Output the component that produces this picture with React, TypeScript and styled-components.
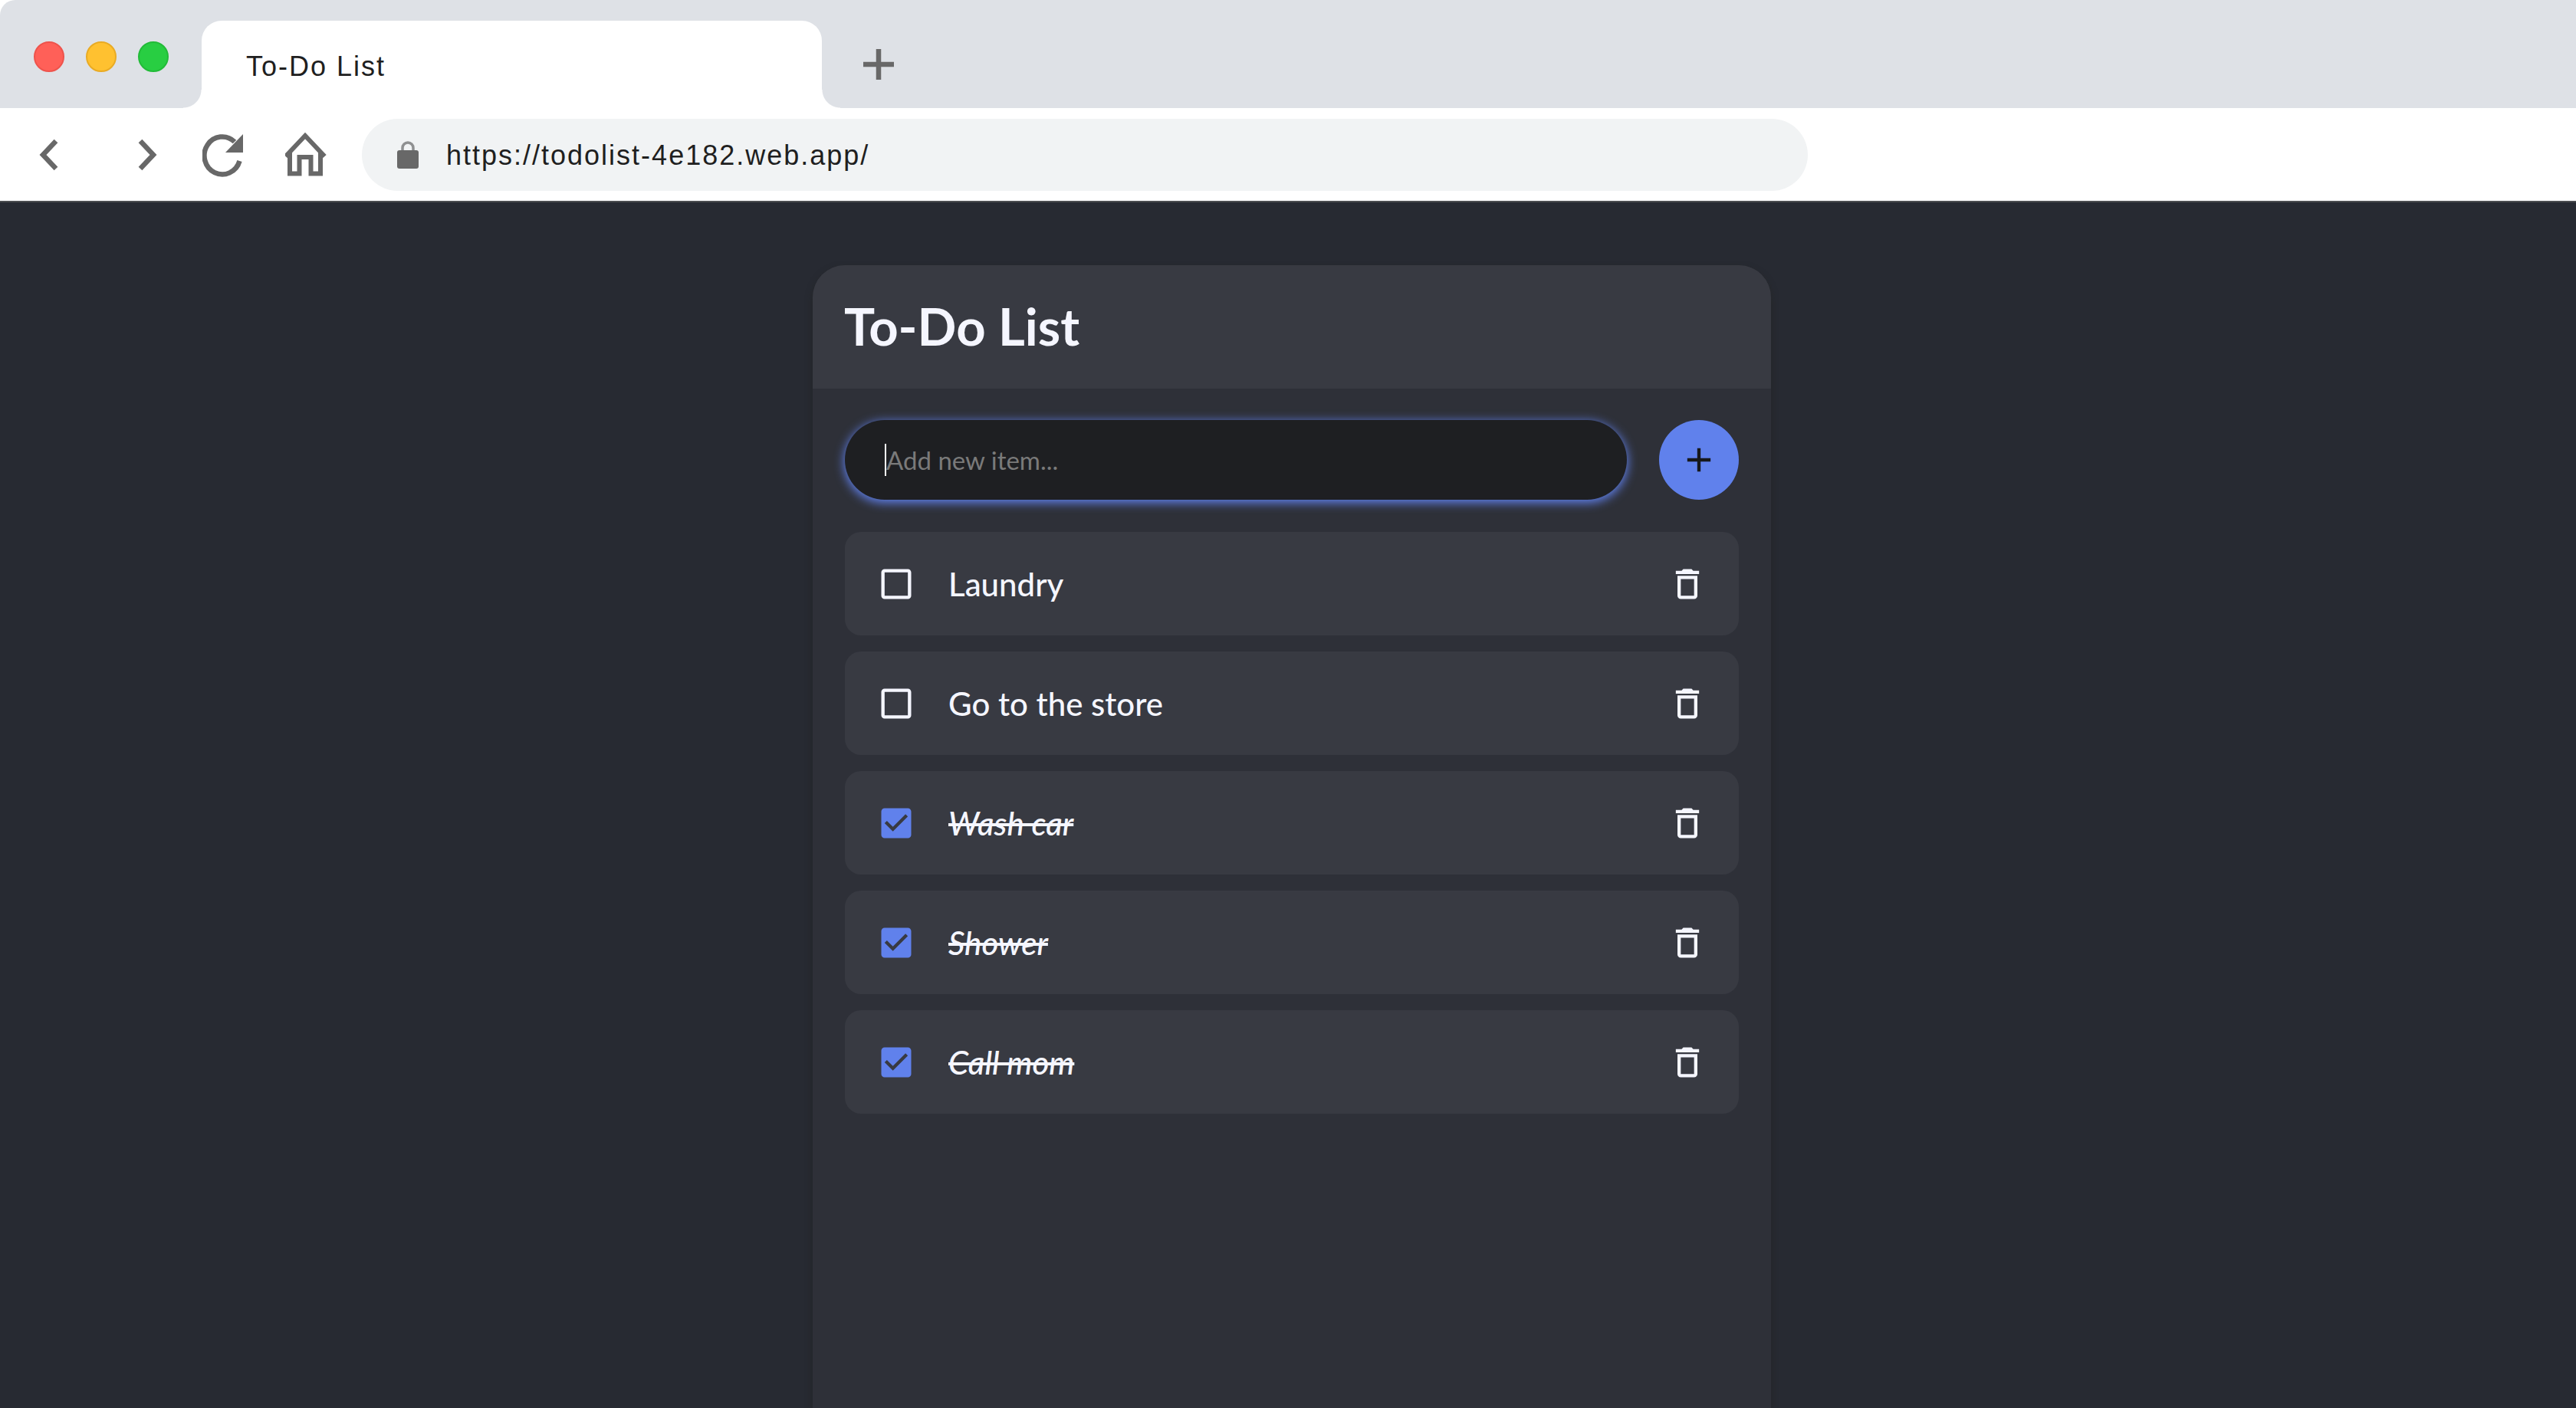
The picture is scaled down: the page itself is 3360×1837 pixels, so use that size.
import React, { useState } from "react";
import styled, { createGlobalStyle } from "styled-components";

const color = {
  strip: "#dee1e6",
  pill: "#f1f3f4",
  chromeIcon: "#686868",
  chromeText: "#1f1f1f",
  page: "#272a32",
  panel: "#2e3038",
  raised: "#383a42",
  field: "#1e1f22",
  accent: "#6081ec",
  text: "#f5f6ff",
  placeholder: "#7a7a7a",
};

const GlobalStyle = createGlobalStyle`
  *, *::before, *::after { box-sizing: border-box; }
  body { margin: 0; background: ${color.page}; }
  button, input { font: inherit; color: inherit; margin: 0; }
`;

const Window = styled.div`
  display: flex;
  flex-direction: column;
  min-height: 100vh;
  font-family: "Lato", "Liberation Sans", sans-serif;
`;

const Chrome = styled.header`
  background: #fff;
  border-bottom: 2px solid #4b4d50;
  font-family: "Liberation Sans", Arial, sans-serif;
  font-size: 36px;
  letter-spacing: 2px;
  color: ${color.chromeText};
`;

const TabStrip = styled.div`
  display: flex;
  height: 141px;
  padding: 27px 44px 0;
  background: ${color.strip};
  border-top-left-radius: 20px;
`;

const Lights = styled.div`
  display: flex;
  gap: 28px;
  padding-top: 27px;
  margin-right: 43px;
`;

const Light = styled.button<{ $fill: string; $edge: string }>`
  width: 40px;
  height: 40px;
  padding: 0;
  border: 2px solid ${(p) => p.$edge};
  border-radius: 50%;
  background: ${(p) => p.$fill};
`;

const Tab = styled.div`
  position: relative;
  display: flex;
  align-items: center;
  flex: 0 1 809px;
  padding: 6px 58px 0;
  background: #fff;
  border-radius: 26px 26px 0 0;

  &::before,
  &::after {
    content: "";
    position: absolute;
    bottom: 0;
    width: 24px;
    height: 24px;
  }
  &::before {
    right: 100%;
    background: radial-gradient(circle at 0 0, ${color.strip} 23px, #fff 24px);
  }
  &::after {
    left: 100%;
    background: radial-gradient(circle at 100% 0, ${color.strip} 23px, #fff 24px);
  }
`;

const ChromeButton = styled.button`
  display: grid;
  place-items: center;
  width: 56px;
  height: 60px;
  padding: 0;
  border: 0;
  background: none;
  color: ${color.chromeIcon};
`;

const NewTab = styled(ChromeButton)`
  align-self: center;
  margin-left: 46px;
`;

const Toolbar = styled.nav`
  display: flex;
  align-items: center;
  gap: 44px;
  padding: 14px 36px 13px;
`;

const NavGroup = styled.div<{ $gap: number }>`
  display: flex;
  gap: ${(p) => p.$gap}px;
`;

const Address = styled.label`
  display: flex;
  align-items: center;
  flex: 0 1 1886px;
  gap: 36px;
  height: 94px;
  padding: 0 46px;
  border-radius: 47px;
  background: ${color.pill};
  color: ${color.chromeIcon};
`;

const AddressInput = styled.input`
  flex: 1;
  min-width: 0;
  padding: 2px 0 0;
  border: 0;
  outline: 0;
  background: none;
  color: ${color.chromeText};
  letter-spacing: inherit;
`;

const Page = styled.main`
  display: flex;
  flex: 1;
  justify-content: center;
  padding: 82px 0 0 10px;
  background: ${color.page};
`;

const Panel = styled.section`
  flex: 0 1 1250px;
  border-radius: 42px 42px 0 0;
  background: ${color.panel};
  box-shadow: 0 5px 10px rgba(36, 38, 38, 0.9);
`;

const PanelHeader = styled.div`
  padding: 38px 41px 41px;
  border-radius: 42px 42px 0 0;
  background: ${color.raised};
`;

const Title = styled.h1`
  margin: 0;
  font-size: 67px;
  line-height: 82px;
  font-weight: 700;
  color: ${color.text};
`;

const Body = styled.div`
  display: flex;
  flex-direction: column;
  gap: 42px;
  padding: 41px 42px;
`;

const AddForm = styled.form`
  display: flex;
  gap: 42px;
`;

const Field = styled.label`
  display: flex;
  align-items: center;
  flex: 1;
  height: 104px;
  padding: 0 52px;
  border-radius: 52px;
  background: ${color.field};
  box-shadow: 0 3px 13px 1px ${color.accent};
  font-size: 33px;
`;

const Caret = styled.span`
  width: 2px;
  height: 42px;
  background: #fff;
`;

const ItemInput = styled.input`
  flex: 1;
  min-width: 0;
  padding: 0;
  border: 0;
  outline: 0;
  background: none;
  color: ${color.text};
  &::placeholder {
    color: ${color.placeholder};
    opacity: 1;
  }
`;

const AddButton = styled.button`
  display: grid;
  place-items: center;
  width: 104px;
  height: 104px;
  padding: 0;
  border: 0;
  border-radius: 50%;
  background: ${color.accent};
  color: #17181b;
`;

const List = styled.ul`
  display: flex;
  flex-direction: column;
  gap: 21px;
  margin: 0;
  padding: 0;
  list-style: none;
`;

const Row = styled.li`
  display: flex;
  align-items: center;
  height: 135px;
  padding: 0 41px;
  border-radius: 21px;
  background: ${color.raised};
  color: ${color.text};
`;

const RowLabel = styled.label`
  display: flex;
  align-items: center;
  flex: 1;
  gap: 42px;
`;

const Tick = styled.span<{ $on: boolean }>`
  display: grid;
  color: ${(p) => (p.$on ? color.accent : color.text)};
  > * {
    grid-area: 1 / 1;
  }
  input {
    width: 52px;
    height: 52px;
    appearance: none;
  }
  svg {
    pointer-events: none;
  }
`;

const ItemText = styled.span<{ $done: boolean }>`
  font-size: 42px;
  line-height: 50px;
  font-weight: 500;
  font-style: ${(p) => (p.$done ? "italic" : "normal")};
  text-decoration: ${(p) => (p.$done ? "line-through" : "none")};
`;

const DeleteButton = styled.button`
  display: grid;
  padding: 0;
  border: 0;
  background: none;
  color: ${color.text};
`;

const ICONS = {
  add: "M19 13h-6v6h-2v-6H5v-2h6V5h2v6h6v2z",
  box: "M19 5v14H5V5h14m0-2H5c-1.1 0-2 .9-2 2v14c0 1.1.9 2 2 2h14c1.1 0 2-.9 2-2V5c0-1.1-.9-2-2-2z",
  checked:
    "M19 3H5c-1.11 0-2 .9-2 2v14c0 1.1.89 2 2 2h14c1.11 0 2-.9 2-2V5c0-1.1-.89-2-2-2zm-9 14l-5-5 1.41-1.41L10 14.17l7.59-7.59L19 8l-9 9z",
  trash:
    "M6 19c0 1.1.9 2 2 2h8c1.1 0 2-.9 2-2V7H6v12zM8 9h8v10H8V9zm7.5-5l-1-1h-5l-1 1H5v2h14V4z",
};

function Icon({ name }: { name: keyof typeof ICONS }) {
  return (
    <svg width="52" height="52" viewBox="0 0 24 24" fill="currentColor" aria-hidden="true">
      <path d={ICONS[name]} />
    </svg>
  );
}

function Chevron({ back = false }: { back?: boolean }) {
  return (
    <svg width="56" height="60" viewBox="0 0 56 60" fill="none" stroke="currentColor" strokeWidth="6.5" aria-hidden="true">
      <path d={back ? "M37 12L20 30l17 18" : "M19 12l17 18-17 18"} />
    </svg>
  );
}

const START = [
  { id: 1, text: "Laundry", done: false },
  { id: 2, text: "Go to the store", done: false },
  { id: 3, text: "Wash car", done: true },
  { id: 4, text: "Shower", done: true },
  { id: 5, text: "Call mom", done: true },
];

export default function App() {
  const [items, setItems] = useState(START);
  const [draft, setDraft] = useState("");

  const toggle = (id: number) =>
    setItems(items.map((i) => (i.id === id ? { ...i, done: !i.done } : i)));
  const remove = (id: number) => setItems(items.filter((i) => i.id !== id));
  const add = (e: React.FormEvent) => {
    e.preventDefault();
    if (!draft.trim()) return;
    setItems([{ id: Date.now(), text: draft.trim(), done: false }, ...items]);
    setDraft("");
  };

  return (
    <Window>
      <GlobalStyle />
      <Chrome>
        <TabStrip>
          <Lights>
            <Light $fill="#ff6058" $edge="#ee534c" aria-label="Close" />
            <Light $fill="#ffc130" $edge="#e9ab24" aria-label="Minimize" />
            <Light $fill="#28ce42" $edge="#22bb38" aria-label="Zoom" />
          </Lights>
          <Tab>To-Do List</Tab>
          <NewTab aria-label="New tab">
            <svg width="42" height="42" viewBox="0 0 42 42" stroke="currentColor" strokeWidth="6.5" aria-hidden="true">
              <path d="M21 1v40M1 21h40" />
            </svg>
          </NewTab>
        </TabStrip>
        <Toolbar aria-label="Browser">
          <NavGroup $gap={72}>
            <ChromeButton aria-label="Back">
              <Chevron back />
            </ChromeButton>
            <ChromeButton aria-label="Forward">
              <Chevron />
            </ChromeButton>
          </NavGroup>
          <NavGroup $gap={52}>
            <ChromeButton aria-label="Reload">
              <svg width="56" height="60" viewBox="0 0 56 60" aria-hidden="true">
                <path
                  d="M48.5 38A23.500 24.500 0 1 1 42 13"
                  fill="none"
                  stroke="currentColor"
                  strokeWidth="6.5"
                />
                <path d="M53 3v24H30z" fill="currentColor" />
              </svg>
            </ChromeButton>
            <ChromeButton aria-label="Home">
              <svg width="56" height="60" viewBox="0 0 56 60" fill="none" stroke="currentColor" strokeWidth="6" aria-hidden="true">
                <path d="M0.5 32L26 5l25.500 27" />
                <path d="M6 27v27.500h12.500V33h15v21.500H46V27" />
              </svg>
            </ChromeButton>
          </NavGroup>
          <Address>
            <svg width="28" height="38" viewBox="0 0 28 38" aria-hidden="true">
              <path d="M7 15v-5a7 7 0 0 1 14 0v5" fill="none" stroke="#8f9091" strokeWidth="3.500" />
              <rect y="13" width="28" height="24" rx="3" fill="currentColor" />
            </svg>
            <AddressInput aria-label="Address" defaultValue="https://todolist-4e182.web.app/" />
          </Address>
        </Toolbar>
      </Chrome>
      <Page>
        <Panel>
          <PanelHeader>
            <Title>To-Do List</Title>
          </PanelHeader>
          <Body>
            <AddForm onSubmit={add}>
              <Field>
                <Caret />
                <ItemInput
                  aria-label="New item"
                  placeholder="Add new item..."
                  value={draft}
                  onChange={(e) => setDraft(e.target.value)}
                />
              </Field>
              <AddButton aria-label="Add item">
                <Icon name="add" />
              </AddButton>
            </AddForm>
            <List>
              {items.map((item) => (
                <Row key={item.id}>
                  <RowLabel>
                    <Tick $on={item.done}>
                      <input type="checkbox" checked={item.done} onChange={() => toggle(item.id)} />
                      <Icon name={item.done ? "checked" : "box"} />
                    </Tick>
                    <ItemText $done={item.done}>{item.text}</ItemText>
                  </RowLabel>
                  <DeleteButton aria-label={`Delete ${item.text}`} onClick={() => remove(item.id)}>
                    <Icon name="trash" />
                  </DeleteButton>
                </Row>
              ))}
            </List>
          </Body>
        </Panel>
      </Page>
    </Window>
  );
}
